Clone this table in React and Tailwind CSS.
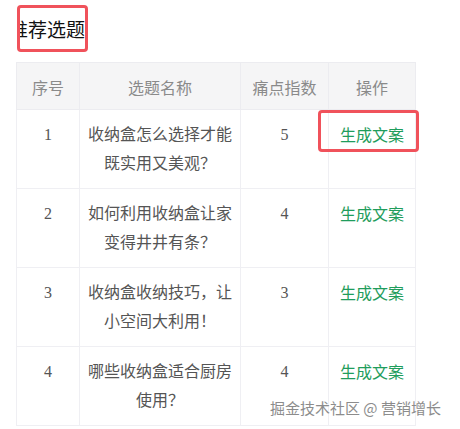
const rows = [
  { id: 1, title: ['收纳盒怎么选择才能', '既实用又美观？'], score: 5 },
  { id: 2, title: ['如何利用收纳盒让家', '变得井井有条？'], score: 4 },
  { id: 3, title: ['收纳盒收纳技巧，让', '小空间大利用！'], score: 3 },
  { id: 4, title: ['哪些收纳盒适合厨房', '使用？'], score: 4 },
];

export default function App() {
  return (
    <div
      className="relative w-[460px] h-[429px] overflow-hidden bg-white"
      style={{ fontFamily: '"Liberation Serif", "Noto Sans CJK SC", serif' }}
    >
      {/* Title */}
      <div className="pl-[17px] pt-[5px] h-[62px]">
        <div className="w-[71px] h-[47px] border-[3px] border-[#f0525b] rounded-[4px] overflow-hidden flex items-center">
          <span
            className="-ml-[11px] whitespace-nowrap text-[19px] text-[#111] leading-none"
            style={{ fontFamily: '"Noto Sans CJK SC", sans-serif' }}
          >
            推荐选题
          </span>
        </div>
      </div>

      {/* Table */}
      <table className="ml-[16px] w-[399px] table-fixed border-collapse text-[16px]">
        <colgroup>
          <col className="w-[63px]" />
          <col className="w-[161px]" />
          <col className="w-[88px]" />
          <col className="w-[87px]" />
        </colgroup>
        <thead>
          <tr className="bg-[#f5f5f6] h-[47px]">
            {['序号', '选题名称', '痛点指数', '操作'].map((h) => (
              <th
                key={h}
                className="border border-[#ececf0] font-normal text-[#8a8a8a] text-center align-middle pt-[2px]"
                style={{ fontFamily: '"Noto Sans CJK SC", sans-serif' }}
              >
                {h}
              </th>
            ))}
          </tr>
        </thead>
        <tbody>
          {rows.map((r) => (
            <tr key={r.id}>
              <td className="border border-[#efeff3] text-center align-top py-[10px] leading-[29px] text-[#555]">
                {r.id}
              </td>
              <td className="border border-[#efeff3] text-center align-top py-[10px] leading-[29px] text-[#555]">
                {r.title.map((t) => (
                  <div key={t}>{t}</div>
                ))}
              </td>
              <td className="border border-[#efeff3] text-center align-top py-[10px] leading-[29px] text-[#555]">
                {r.score}
              </td>
              <td className="border border-[#efeff3] text-center align-top py-[10px] leading-[29px]">
                <span className="text-[#1f9d5c]" style={{ fontFamily: '"Noto Sans CJK SC", sans-serif' }}>
                  生成文案
                </span>
              </td>
            </tr>
          ))}
        </tbody>
      </table>

      {/* highlight on first action */}
      <div className="absolute left-[318px] top-[110px] w-[101px] h-[42px] border-[3px] border-[#f0525b] rounded-[4px]" />

      {/* watermark */}
      <div
        className="absolute left-[270px] top-[398px] text-[15px] leading-[20px] text-[#8c8c8c] whitespace-nowrap"
        style={{ fontFamily: '"Noto Sans CJK SC", sans-serif', textShadow: '0 0 2px #fff, 0 0 2px #fff' }}
      >
        掘金技术社区 @ 营销增长
      </div>
    </div>
  );
}
